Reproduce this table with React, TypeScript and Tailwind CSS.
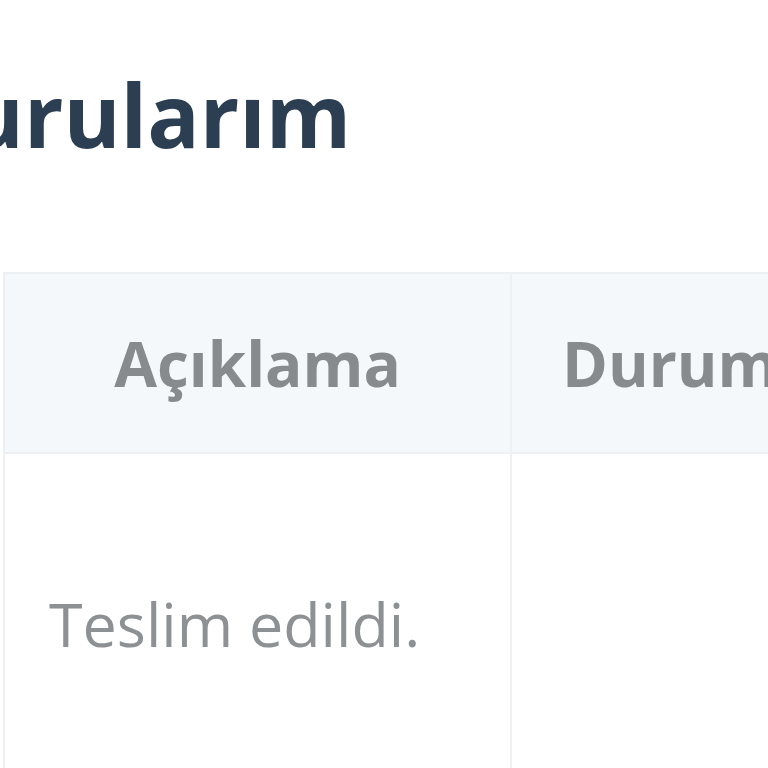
export default function App() {
  return (
    <div className="w-[768px] h-[768px] overflow-hidden bg-white font-['Open_Sans',sans-serif]">
      <h1 className="mt-[71px] ml-[-237px] whitespace-nowrap text-[87px] font-bold leading-none text-[#2c3e52]">
        Başvurularım
      </h1>
      <div className="mt-[114px] ml-[3px] w-[900px] border-l-2 border-t-2 border-[#eef1f3]">
        <div className="flex h-[180px] bg-[#f5f8fa] border-b-2 border-[#eef1f3]">
          <div className="flex w-[507px] shrink-0 items-center justify-center border-r-2 border-[#eef1f3] text-[62px] font-bold text-[#888b8e]">
            Açıklama
          </div>
          <div className="flex items-center pl-[50px] text-[62px] font-bold text-[#888b8e]">
            Durum
          </div>
        </div>
        <div className="flex h-[400px]">
          <div className="w-[507px] shrink-0 border-r-2 border-[#eef1f3] pl-[44px] pt-[124px] text-[61px] text-[#8e9193]">
            Teslim edildi.
          </div>
          <div className="flex-1" />
        </div>
      </div>
    </div>
  );
}
